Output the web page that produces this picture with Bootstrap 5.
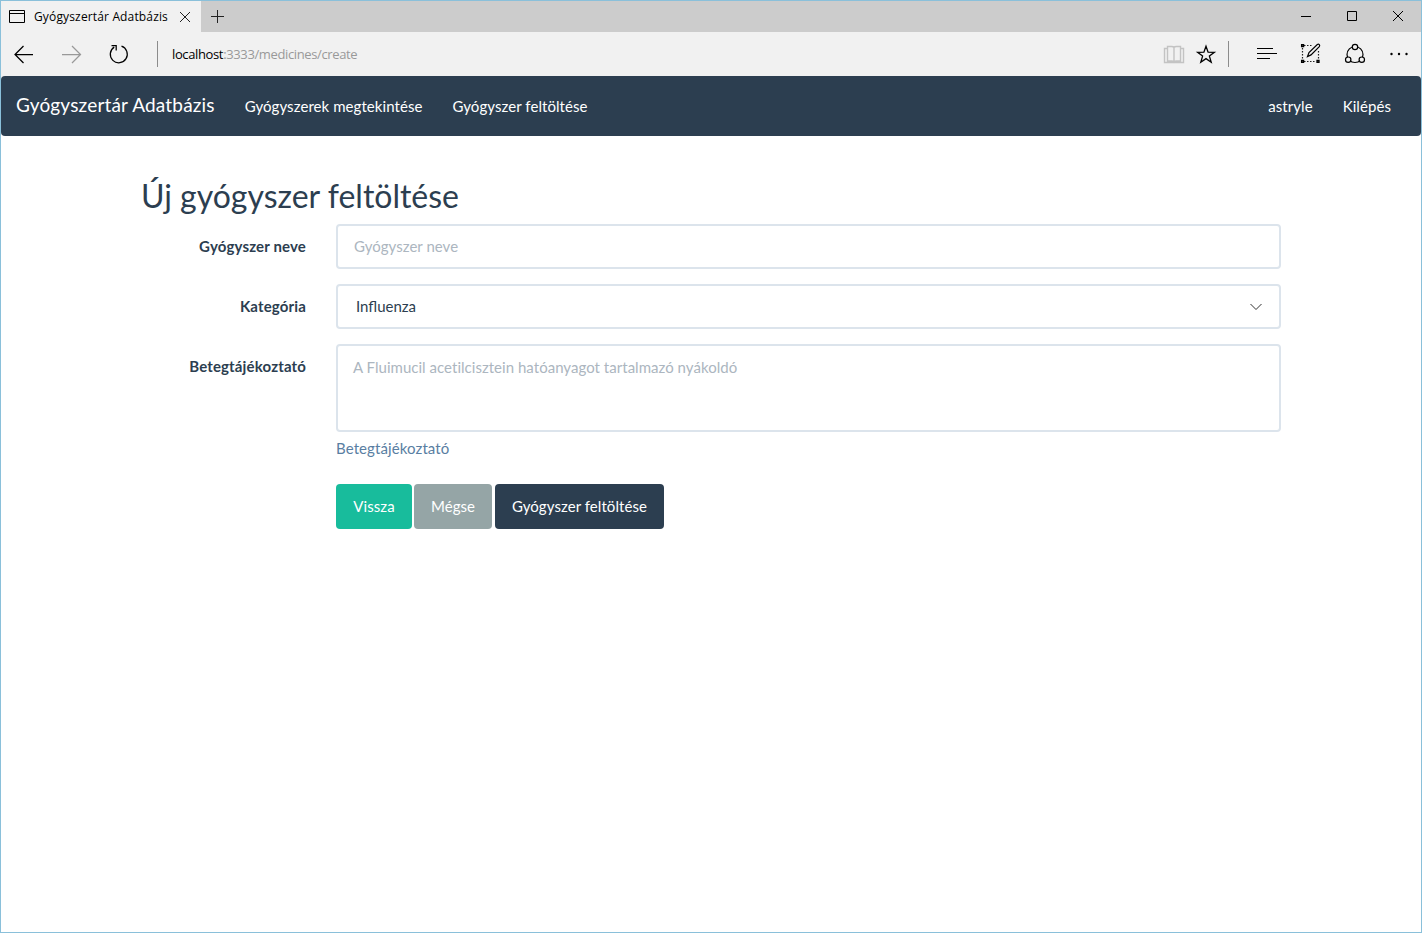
<!DOCTYPE html>
<html lang="hu">
<head>
<meta charset="utf-8">
<meta name="viewport" content="width=device-width, initial-scale=1">
<title>Gyógyszertár Adatbázis</title>
<link href="https://cdn.jsdelivr.net/npm/bootstrap@5.3.0/dist/css/bootstrap.min.css" rel="stylesheet">
<style>
body{font-family:Lato,"Liberation Sans",sans-serif;font-size:15px;line-height:1.42857;color:#2c3e50;background:#fff;font-variant-ligatures:none}
.window{height:933px;border:1px solid #8ac0da;overflow:hidden}
.window svg{display:block;flex:none}
.chrome{font-family:"Open Sans","Noto Sans",sans-serif;color:#000}
.tabstrip{height:31px;background:#cccccc}
.tab-open{width:200px;background:#f1f1f1;padding-left:8px}
.tab-title{font-size:12px;letter-spacing:.15px;margin-left:9px;width:136px;white-space:nowrap}
.tab-close{margin-left:9px}
.toolbar{height:44px;background:#f1f1f1}
.sep{width:1px;height:26px;background:#8c8c8c}
.url{font-size:13px;letter-spacing:-.37px;margin-left:14px;white-space:nowrap}
.url span{color:#999}
.site-nav{height:60px;background:#2c3e50;border-radius:4px;padding:0 15px}
.nav-back{background:linear-gradient(#f1f1f1 50%,#fff 50%)}
.site-nav .navbar-brand{font-size:19px;letter-spacing:.18px;line-height:20px;color:#fff;margin:0 15px 0 0;padding:0 0 2px}
.site-nav .navbar-nav .nav-link{color:#fff;padding:0 15px;line-height:21px;letter-spacing:.07px}
.page{max-width:1170px;padding:0 15px}
.page h1{font-size:32px;font-weight:400;line-height:35px;margin:42px 0 11px}
.page .row{--bs-gutter-x:30px;margin-bottom:15px}
.page .col-form-label{font-weight:700;font-size:15px;line-height:21px;letter-spacing:.15px;padding-top:12px;padding-bottom:0}
.page .form-control,.page .form-select{height:45px;border:2px solid #dce4ec;border-radius:4px;padding:10px 15px;font-size:15px;line-height:21px;color:#2c3e50}
.page .form-control::placeholder{color:#acb6c0;opacity:1}
.page .form-control{padding:9px 15px 11px 16px;letter-spacing:.03px}
.page .form-select{padding-left:18px;background-image:url("data:image/svg+xml,%3Csvg xmlns='http://www.w3.org/2000/svg' viewBox='0 0 12 8'%3E%3Cpath d='M.5 1 6 6.5 11.5 1' fill='none' stroke='%23333'/%3E%3C/svg%3E");background-size:12px 8px;background-position:right 17.5px center}
.page textarea.form-control{height:88px;resize:none;padding-left:15px;padding-top:11px}
.help{display:block;color:#597ea2;line-height:21px;letter-spacing:.1px;margin-top:6px}
.page .btn{font-size:15px;line-height:21px;letter-spacing:.07px;height:45px;padding:11px 0 12px;border:1px solid transparent;border-radius:4px;color:#fff}
.b-back{background:#18bc9c;width:76px}
.b-cancel{background:#95a5a6;width:78px;margin:0 3px 0 2px}
.b-send{background:#2c3e50;width:169px}
.page .actions{padding-top:10px}
</style>
</head>
<body>
<div class="window">
<div class="chrome">
  <div class="tabstrip d-flex">
    <div class="tab-open d-flex align-items-center">
      <svg width="16" height="13" viewBox="0 0 16 13" fill="none" stroke="#000"><path d="M.5.5h15v12H.5zM.5 3.5h15"/></svg>
      <span class="tab-title">Gyógyszertár Adatbázis</span>
      <svg class="tab-close" width="12" height="12" viewBox="0 0 12 12" fill="none" stroke="#222"><path d="M1 1l10 10M11 1 1 11"/></svg>
    </div>
    <svg width="34" height="31" viewBox="0 0 34 31" fill="none" stroke="#222"><path d="M16.500 9v13M10 15.500h13"/></svg>
    <svg class="ms-auto" width="138" height="31" viewBox="0 0 138 31" fill="none" stroke="#000"><path d="M18 15.500h10M64.500 10.500h9v9h-9zM110 10l10 10M120 10l-10 10"/></svg>
  </div>
  <div class="toolbar d-flex align-items-center">
    <svg width="156" height="44" viewBox="1 32 156 44" fill="none" stroke="#000" stroke-width="1.250"><path d="M33 54.500H15M23.500 46l-8.500 8.500 8.500 8.500"/><path stroke="#999" d="M62 54.500h18M72 46l8.500 8.500-8.500 8.500"/><path d="M121.500 46.200a8.500 8.500 0 1 1-7.300.9M111.500 45.700h4.700v4.700"/></svg>
    <div class="sep"></div>
    <div class="url">localhost<span>:3333/medicines/create</span></div>
    <svg class="ms-auto" width="261" height="44" viewBox="1160 32 261 44" fill="none" stroke="#000" stroke-width="1.200">
      <path stroke="#c3c3c3" stroke-width="1.400" d="M1167.500 46.500h4q2 0 2.500 1 .5-1 2.500-1h4v14.500h-4q-2 0-2.500 1-.5-1-2.500-1h-4zM1174 47.500V62M1167 48.500h-2.500v14h19v-14h-2.500"/>
      <path stroke-width="1.300" d="M1206 46.200l2.100 5.900 6.300.2-5 3.800 1.800 6.100-5.200-3.600-5.200 3.600 1.800-6.100-5-3.800 6.300-.2z"/>
      <path stroke="#8c8c8c" stroke-width="1" d="M1228.500 41v26"/>
      <path d="M1257 48.500h16M1257 53.500h20M1257 58.500h13"/>
      <path stroke="#222" stroke-dasharray="1.500 1.500" d="M1302.500 48v12M1304 45.500h9M1318.500 51v9M1304 61.500h12"/>
      <path fill="#555" stroke-width="1.300" d="M1301.600 44.600h2v2h-2zM1301.600 60.300h2v2h-2zM1317 60.300h2v2h-2z"/>
      <path fill="#f1f1f1" d="M1307.500 56.500l1.500-4 8.300-8q1.200-.7 2 .1t0 2l-8.300 8.300z"/>
      <circle cx="1355" cy="54.500" r="8"/>
      <g fill="#f1f1f1"><circle cx="1355" cy="47" r="2.700"/><circle cx="1348.200" cy="59.700" r="2.700"/><circle cx="1361.800" cy="59.700" r="2.700"/></g>
      <g fill="#000" stroke="none"><circle cx="1391.500" cy="54" r="1.200"/><circle cx="1399" cy="54" r="1.200"/><circle cx="1406.500" cy="54" r="1.200"/></g>
    </svg>
  </div>
</div>
<div class="nav-back">
  <nav class="site-nav navbar navbar-expand">
    <a class="navbar-brand" href="#">Gyógyszertár Adatbázis</a>
    <div class="navbar-nav"><a class="nav-link" href="#">Gyógyszerek megtekintése</a><a class="nav-link" href="#">Gyógyszer feltöltése</a></div>
    <div class="navbar-nav ms-auto"><a class="nav-link" href="#">astryle</a><a class="nav-link" href="#">Kilépés</a></div>
  </nav>
</div>
<main class="container page">
  <h1>Új gyógyszer feltöltése</h1>
  <form>
    <div class="row"><label class="col-2 col-form-label text-end" for="name">Gyógyszer neve</label><div class="col-10"><input id="name" class="form-control" placeholder="Gyógyszer neve"></div></div>
    <div class="row"><label class="col-2 col-form-label text-end" for="cat">Kategória</label><div class="col-10"><select id="cat" class="form-select"><option>Influenza</option></select></div></div>
    <div class="row"><label class="col-2 col-form-label text-end" for="info">Betegtájékoztató</label><div class="col-10"><textarea id="info" class="form-control" placeholder="A Fluimucil acetilcisztein hatóanyagot tartalmazó nyákoldó"></textarea><span class="help">Betegtájékoztató</span></div></div>
    <div class="row actions"><div class="col-10 offset-2 d-flex"><button type="button" class="btn b-back">Vissza</button><button type="button" class="btn b-cancel">Mégse</button><button type="button" class="btn b-send">Gyógyszer feltöltése</button></div></div>
  </form>
</main>
</div>
</body>
</html>
